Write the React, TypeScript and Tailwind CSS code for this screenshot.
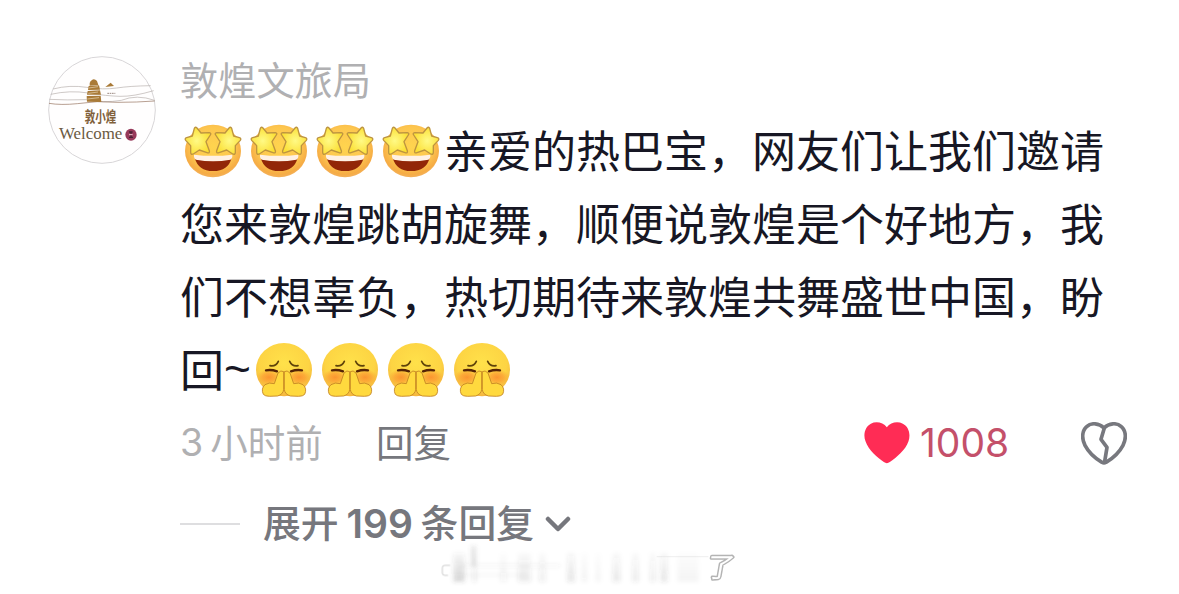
import React from "react";

const StarFace = () => (
  <svg className="h-[60px] w-[66px] shrink-0" viewBox="15 18 198 180">
    <defs>
      <radialGradient id="starSkin" cx="50%" cy="42%" r="58%">
        <stop offset="0" stopColor="#ffd44e" />
        <stop offset="0.65" stopColor="#fdc64f" />
        <stop offset="0.9" stopColor="#f6ac45" />
        <stop offset="1" stopColor="#f3b15c" />
      </radialGradient>
      <radialGradient id="starFill" cx="45%" cy="50%" r="60%">
        <stop offset="0" stopColor="#fffa86" />
        <stop offset="1" stopColor="#fbdc2c" />
      </radialGradient>
      <path
        id="star"
        d="M58 40 Q61 34 66 39 L78 54 L103 53 Q110 54 106 60 L93 80 L103 107 Q105 116 96 113 L73 105 L55 117 Q47 120 47 112 L47 92 L32 76 Q28 70 35 68 L52 63 Z"
      />
    </defs>
    <ellipse cx="114" cy="108" rx="84" ry="79" fill="url(#starSkin)" />
    <path d="M59 128 Q114 142 170 128 Q160 168 114 168 Q70 168 59 128 Z" fill="#922708" />
    <path d="M57 119 Q114 126 172 119 Q173 131 166 134 Q114 144 63 134 Q56 131 57 119 Z" fill="#fff1e4" />
    <use href="#star" fill="url(#starFill)" stroke="#bd9440" strokeWidth="4" strokeLinejoin="round" />
    <use
      href="#star"
      transform="translate(228 0) scale(-1 1)"
      fill="url(#starFill)"
      stroke="#bd9440"
      strokeWidth="4"
      strokeLinejoin="round"
    />
  </svg>
);

const PrayFace = () => (
  <svg className="h-[60px] w-[66px] shrink-0" viewBox="226 13 198 180">
    <defs>
      <radialGradient id="praySkin" cx="50%" cy="38%" r="63%">
        <stop offset="0" stopColor="#ffe14a" />
        <stop offset="0.7" stopColor="#fdd443" />
        <stop offset="1" stopColor="#f3b240" />
      </radialGradient>
      <radialGradient id="blush">
        <stop offset="0" stopColor="#fb8a2c" stopOpacity="0.85" />
        <stop offset="0.5" stopColor="#fb9030" stopOpacity="0.6" />
        <stop offset="1" stopColor="#fb9a2c" stopOpacity="0" />
      </radialGradient>
    </defs>
    <ellipse cx="328" cy="102" rx="84" ry="80" fill="url(#praySkin)" />
    <ellipse cx="283" cy="125" rx="37" ry="25" fill="url(#blush)" />
    <ellipse cx="373" cy="125" rx="37" ry="25" fill="url(#blush)" />
    <g fill="none" stroke="#5f430a" strokeWidth="5" strokeLinecap="round">
      <path d="M286 90 Q304 93 311 77" />
      <path d="M370 90 Q352 93 345 77" />
    </g>
    <g fill="none" stroke="#552306" strokeWidth="7" strokeLinecap="round">
      <path d="M274 104 Q290 101 307 107" />
      <path d="M382 104 Q366 101 349 107" />
    </g>
    <g fill="#ffd93e" stroke="#c08022" strokeWidth="2.5" strokeLinejoin="round">
      <path d="M327 108 Q319 102 310 112 L299 144 Q283 139 271 147 Q258 159 266 176 Q271 182 285 182 L309 181 Q325 176 327 162 Z" />
      <path d="M329 108 Q337 102 346 112 L357 144 Q373 139 385 147 Q398 159 390 176 Q385 182 371 182 L347 181 Q331 176 329 162 Z" />
    </g>
  </svg>
);

const Avatar = () => (
  <svg className="mt-[56px] h-[108px] w-[108px] shrink-0" viewBox="24 18 324 324">
    <circle cx="186" cy="180" r="160" fill="#fffefe" stroke="#d8d6d8" strokeWidth="3" />
    <g fill="none" stroke="#b5aeaa" strokeWidth="2">
      <path d="M39 117 Q90 104 140 112 T230 114 T332 107" />
      <path d="M32 133 Q90 120 145 129 T240 139 T341 122" />
      <path d="M28 148 Q80 151 139 149 Q190 160 244 151 Q290 132 344 151" />
      <path d="M27 160 Q62 166 112 161 Q170 151 234 157 Q290 157 344 153" stroke="#94705a" />
    </g>
    <g fill="#a97a37">
      <path d="M149 99 Q159 80 171 93 L175 105 L149 107 Z" />
      <path d="M146 108 L177 106 L180 119 L144 120 Z" />
      <path d="M143 123 L180 121 L183 134 L141 134 Z" />
      <path d="M140 138 L182 137 L184 156 L141 155 Z" />
      <path d="M196 111 L212 98 L222 108 Z" />
    </g>
    <path d="M146 114 L174 110 M145 130 L174 126 M142 147 L177 143" stroke="#ead9ba" strokeWidth="2" />
    <path d="M202 130 H226" stroke="#9a8880" strokeWidth="3" strokeDasharray="5 2" />
    <text
      x="134"
      y="216"
      fontSize="44"
      fontWeight="700"
      textLength="95"
      lengthAdjust="spacingAndGlyphs"
      fill="#80603a"
      fontFamily="'Noto Sans CJK SC', sans-serif"
    >
      敦小煌
    </text>
    <text
      x="57"
      y="268"
      fontSize="52"
      textLength="190"
      lengthAdjust="spacingAndGlyphs"
      fill="#6b5a42"
      fontFamily="'Liberation Serif', serif"
    >
      Welcome
    </text>
    <ellipse cx="273" cy="254" rx="17" ry="18" fill="#97395a" />
    <path d="M267 246 H278 M273 245 V263 M267 262 H279" stroke="#492135" strokeWidth="4" />
    <path d="M267 254 H278" stroke="#efc4cd" strokeWidth="3" />
  </svg>
);

const Heart = () => (
  <svg className="h-[42px] w-[46px]" viewBox="42 37 137 126">
    <path
      d="M110 53 C99 38 78 34 62 42 C45 51 38 74 46 95 C55 122 83 145 101 157 Q110 164 119 157 C138 144 166 122 175 95 C182 73 176 51 158 42 C142 34 121 38 110 53 Z"
      fill="#ff2c55"
    />
  </svg>
);

const BrokenHeart = () => (
  <svg className="h-[43px] w-[46px]" viewBox="693 33 138 129">
    <g fill="none" stroke="#77787e" strokeWidth="11" strokeLinejoin="round" strokeLinecap="round">
      <path d="M762 51 C747 36 724 34 710 47 C695 60 695 84 705 103 C716 124 739 144 756 154 Q762 158 768 154 C785 144 808 124 819 103 C829 84 829 60 814 47 C800 34 777 36 762 51 Z" />
      <path d="M763 51 L753 85 L771 109 L764 152" />
    </g>
  </svg>
);

// smeared caption under the thread, only the last character is still readable
const streaks = [
  { x: 70, w: 34, o: 0.2 },
  { x: 127, w: 12, o: 0.1 },
  { x: 210, w: 20, o: 0.05 },
  { x: 264, w: 38, o: 0.1 },
  { x: 327, w: 20, o: 0.08 },
  { x: 412, w: 22, o: 0.13 },
  { x: 455, w: 16, o: 0.05 },
  { x: 498, w: 12, o: 0.05 },
  { x: 548, w: 22, o: 0.11 },
  { x: 607, w: 18, o: 0.1 },
  { x: 660, w: 16, o: 0.09 },
  { x: 692, w: 20, o: 0.13 },
  { x: 742, w: 64, o: 0.04 },
];

const Watermark = () => (
  <svg className="ml-[430px] h-[49px] w-[320px] overflow-visible" viewBox="0 30 960 147">
    <defs>
      <filter id="smear" x="-10%" y="-10%" width="120%" height="120%">
        <feGaussianBlur stdDeviation="6 6" />
      </filter>
      <linearGradient id="fade" x1="0" y1="0" x2="0" y2="1">
        <stop offset="0" stopColor="#444" stopOpacity="0.2" />
        <stop offset="1" stopColor="#444" />
      </linearGradient>
    </defs>
    <g filter="url(#smear)">
      {streaks.map((s) => (
        <rect key={s.x} x={s.x} y="54" width={s.w} height="86" fill="url(#fade)" opacity={s.o * 1.1} />
      ))}
      <rect x="124" y="33" width="14" height="60" fill="#555" opacity="0.16" />
      <rect x="90" y="90" width="300" height="4" fill="#555" opacity="0.12" />
      <rect x="90" y="118" width="200" height="4" fill="#555" opacity="0.08" />
    </g>
    <path d="M60 91 H44 Q37 91 37 98 V114 Q37 121 44 121 H54" fill="none" stroke="#aaa" strokeWidth="3" opacity="0.6" />
    <path d="M680 65 H835" stroke="#aaa" strokeWidth="3" opacity="0.2" />
    <g transform="translate(24 0) skewX(-10)" fontFamily="'Noto Sans CJK SC', sans-serif">
      <text
        x="824"
        y="127"
        fontSize="82"
        fill="#fff"
        stroke="#b4b4b4"
        strokeWidth="9"
        strokeLinejoin="round"
        paintOrder="stroke"
      >
        了
      </text>
    </g>
  </svg>
);

const four = [0, 1, 2, 3];

const App = () => {
  return (
    <div className="h-[594px] w-[1179px] overflow-hidden bg-white font-['Noto_Sans_CJK_SC',sans-serif]">
      <div className="flex h-[545px] pl-[48px]">
        <Avatar />
        <div className="ml-[24px] flex w-[947px] flex-col pt-[54px]">
          <h4 className="h-[60px] shrink-0 whitespace-nowrap text-[38.2px] leading-[50px] text-[#b0b0b2]">
            敦煌文旅局
          </h4>
          <div className="whitespace-nowrap text-[44px] leading-[71px] text-[#171724]">
            <div className="flex h-[73px] items-center">
              {four.map((i) => (
                <StarFace key={i} />
              ))}
              <span className="pb-[2px]">亲爱的热巴宝，网友们让我们邀请</span>
            </div>
            <p className="h-[73px]">您来敦煌跳胡旋舞，顺便说敦煌是个好地方，我</p>
            <p className="h-[73px]">们不想辜负，热切期待来敦煌共舞盛世中国，盼</p>
            <div className="flex h-[73px] items-center">
              <span className="pb-[2px]">回</span>
              <span className="w-[26px] font-['Liberation_Sans',sans-serif] text-[46px]">~</span>
              {four.map((i) => (
                <PrayFace key={i} />
              ))}
            </div>
          </div>
          <div className="flex h-[74px] shrink-0 items-center whitespace-nowrap text-[37.5px] leading-[56px]">
            <span className="flex w-[196px] items-center text-[#b0b0b2]">
              <span className="mr-[7px] font-['Inter',sans-serif]">3</span>
              <span className="pb-[4px]">小时前</span>
            </span>
            <span className="pb-[4px] text-[#76777d]">回复</span>
            <div className="ml-auto flex items-center">
              <Heart />
              <span className="ml-[10px] w-[161px] font-['Inter',sans-serif] text-[39px] text-[#c4506a]">
                1008
              </span>
              <BrokenHeart />
            </div>
          </div>
          <div className="flex h-[88px] shrink-0 items-center whitespace-nowrap text-[37.8px] leading-[56px] font-medium text-[#76777d]">
            <span className="mr-[23px] h-[2px] w-[60px] bg-[#dedee0]" />
            <span className="pb-[6px]">展开</span>
            <span className="ml-[8px] w-[74px] font-['Inter',sans-serif] text-[39px] font-semibold">199</span>
            <span className="pb-[6px]">条回复</span>
            <svg className="ml-[11px] h-[16px] w-[26px]" viewBox="0 0 26 16">
              <path
                d="M3 3 L13 13 L23 3"
                fill="none"
                stroke="#76777d"
                strokeWidth="4.5"
                strokeLinecap="round"
                strokeLinejoin="round"
              />
            </svg>
          </div>
        </div>
      </div>
      <Watermark />
    </div>
  );
};

export default App;
